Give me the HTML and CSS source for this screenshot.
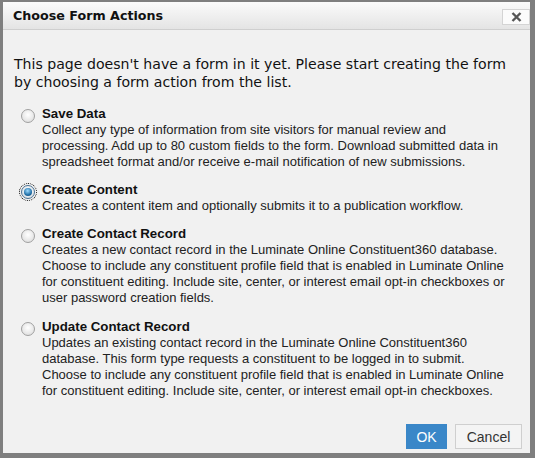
FILE: index.html
```html
<!DOCTYPE html>
<html>
<head>
<meta charset="utf-8">
<link rel="stylesheet" href="styles.css">
</head>
<body>
<div class="dialog">
  <div class="header">
    <span class="title">Choose Form Actions</span>
    <span class="close"><svg width="11" height="10" viewBox="0 0 11 10"><path d="M1.5 1 L9.5 9 M9.5 1 L1.5 9" stroke="#555" stroke-width="2.4" fill="none"/></svg></span>
  </div>
  <div class="body">
    <p class="intro">This page doesn't have a form in it yet. Please start creating the form by choosing a form action from the list.</p>
    <div class="options">
      <label class="option">
        <span class="radio"></span>
        <span class="text">
          <span class="name">Save Data</span>
          <span class="desc">Collect any type of information from site visitors for manual review and processing. Add up to 80 custom fields to the form. Download submitted data in spreadsheet format and/or receive e-mail notification of new submissions.</span>
        </span>
      </label>
      <label class="option">
        <span class="radio checked"><span class="dot"></span></span>
        <span class="text">
          <span class="name">Create Content</span>
          <span class="desc">Creates a content item and optionally submits it to a publication workflow.</span>
        </span>
      </label>
      <label class="option">
        <span class="radio"></span>
        <span class="text">
          <span class="name">Create Contact Record</span>
          <span class="desc">Creates a new contact record in the Luminate Online Constituent360 database. Choose to include any constituent profile field that is enabled in Luminate Online for constituent editing. Include site, center, or interest email opt-in checkboxes or user password creation fields.</span>
        </span>
      </label>
      <label class="option">
        <span class="radio"></span>
        <span class="text">
          <span class="name">Update Contact Record</span>
          <span class="desc">Updates an existing contact record in the Luminate Online Constituent360 database. This form type requests a constituent to be logged in to submit. Choose to include any constituent profile field that is enabled in Luminate Online for constituent editing. Include site, center, or interest email opt-in checkboxes.</span>
        </span>
      </label>
    </div>
  </div>
  <div class="footer">
    <button class="btn ok">OK</button>
    <button class="btn cancel">Cancel</button>
  </div>
</div>
</body>
</html>
```
FILE: styles.css
```css
html, body {
  margin: 0;
  padding: 0;
  background: #7f7f7f;
  height: 458px;
  overflow: hidden;
}
body {
  padding: 2px 5px 0 3px;
  box-sizing: border-box;
}
.dialog {
  width: 527px;
  height: 451px;
  background: #f1f1f1;
  display: flex;
  flex-direction: column;
  font-family: "Liberation Sans", Arial, sans-serif;
  color: #222;
}
.header {
  height: 27px;
  border-bottom: 1px solid #cfcfcf;
  background: linear-gradient(#fbfbfb, #e4e4e4);
  display: flex;
  align-items: center;
  justify-content: space-between;
  padding: 0 0 0 10px;
}
.title {
  font-family: "DejaVu Sans", Verdana, sans-serif;
  font-weight: bold;
  font-size: 12.7px;
  color: #111;
}
.close {
  width: 28px;
  height: 16px;
  box-sizing: border-box;
  border: 1px solid #d4d4d4;
  background: #fbfbfb;
  display: flex;
  align-items: center;
  justify-content: center;
  margin: 3px 0 0 0;
}
.body {
  flex: 1;
  padding: 0 11px;
}
.intro {
  font-family: "DejaVu Sans", Verdana, sans-serif;
  font-size: 14.1px;
  line-height: 18px;
  margin: 25px 0 14px;
  color: #111;
}
.options {
  display: flex;
  flex-direction: column;
  gap: 11px;
  padding: 0 13px 0 7px;
}
.option {
  display: flex;
  gap: 7px;
}
.option:last-child {
  margin-top: 1px;
}
.radio {
  width: 14px;
  height: 14px;
  flex: none;
  margin-top: 4px;
  border-radius: 50%;
  border: 1px solid #a0a0a0;
  background: radial-gradient(circle at 50% 40%, #ffffff, #d8d8d8);
  box-sizing: border-box;
  display: flex;
  align-items: center;
  justify-content: center;
}
.radio.checked {
  border-color: #4a6f8f;
  background: radial-gradient(circle at 50% 40%, #ffffff, #cfd8e0);
  outline: 1px dotted #000;
  outline-offset: 1px;
}
.dot {
  width: 8px;
  height: 8px;
  border-radius: 50%;
  background: radial-gradient(circle at 45% 35%, #9fdcff, #1f6fa8 60%, #0f3d66);
}
.text {
  display: flex;
  flex-direction: column;
  font-size: 13px;
  line-height: 16px;
}
.name {
  font-weight: bold;
  font-size: 13.3px;
  line-height: 17px;
  color: #111;
}
.desc {
  color: #222;
}
.footer {
  display: flex;
  justify-content: flex-end;
  gap: 8px;
  padding: 0 8px 4px 0;
}
.btn {
  height: 25px;
  font-family: "Liberation Sans", Arial, sans-serif;
  font-size: 14px;
  padding: 0;
  border-radius: 0;
}
.ok {
  width: 41px;
  background: #3a87c8;
  border: 1px solid #3a87c8;
  color: #fff;
}
.cancel {
  width: 67px;
  background: #f4f4f4;
  border: 1px solid #cfcfcf;
  color: #333;
}
```
